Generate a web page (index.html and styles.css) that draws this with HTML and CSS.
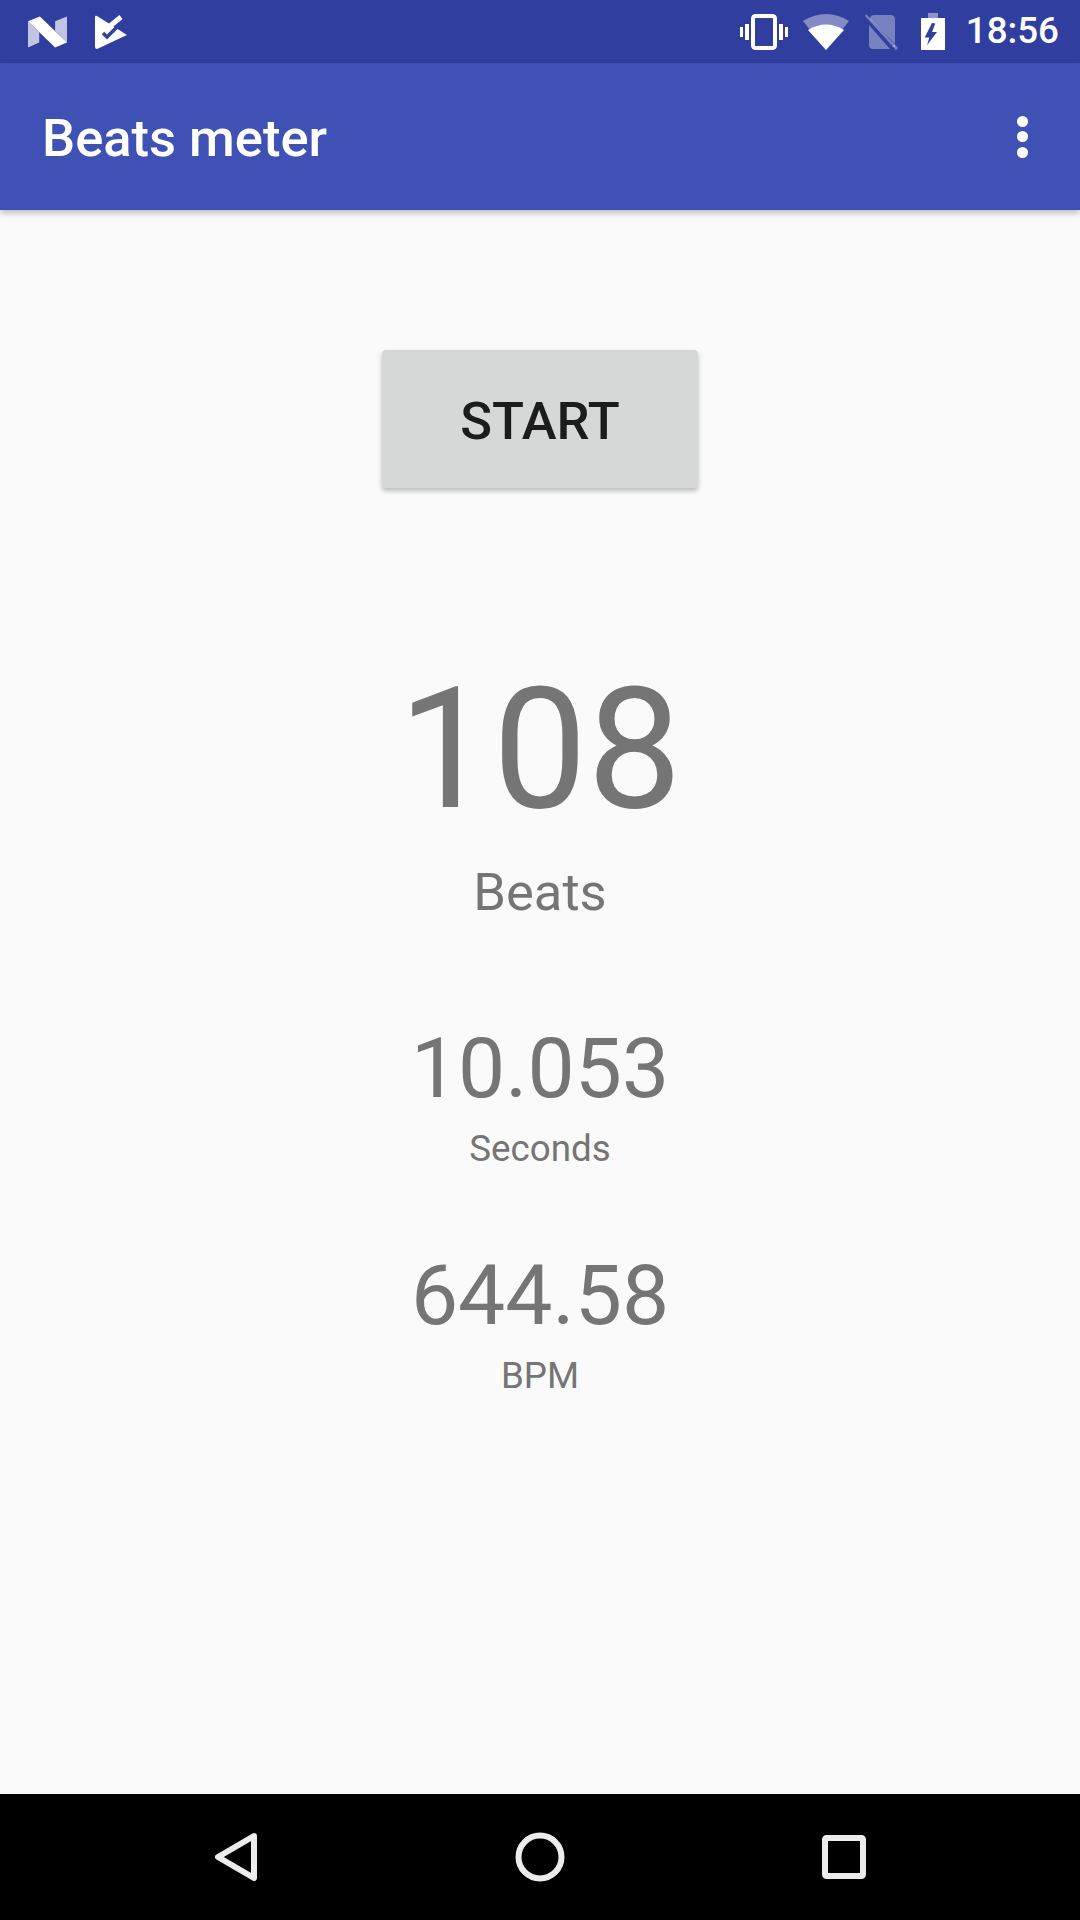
FILE: index.html
```html
<!DOCTYPE html>
<html lang="en">
<head>
<meta charset="utf-8">
<title>Beats meter</title>
<link rel="stylesheet" href="styles.css">
</head>
<body>
<div class="screen">
  <header class="statusbar">
    <div class="status-left">
      <svg class="icon-n" viewBox="85 47 115 94"><path class="dim" d="M85 62 118 95V125L85 140Z"/><path class="dim" d="M165 62 200 48V125L165 90Z"/><path d="M85 62 120 48 200 125 165 140Z"/></svg>
      <svg class="icon-check" viewBox="0 0 33 34"><path d="M0 2Q0 0 2 1L32 20 2 34Q0 34 0 32Z"/><path class="tick" d="M15 11 26 2"/><path class="notch" d="M8 18 12 22 25 9"/></svg>
    </div>
    <div class="status-right">
      <svg class="icon-vibrate" viewBox="0 0 48 36"><rect x="13" y="2" width="22" height="32" rx="2.5"/><path d="M7 10V26M1 13V23M41 10V26M47 13V23"/></svg>
      <svg class="icon-wifi" viewBox="0 0 46 36"><path class="dim" d="M23 36 0 7Q23-7 46 7Z"/><path d="M23 36 5 16Q23 5 41 16Z"/></svg>
      <svg class="icon-sim" viewBox="0 0 36 36"><path class="dim" d="M6 5Q6 1 10 1H26Q31 1 31 5V30L6 5ZM5 11 26 35H9Q5 35 5 31Z"/><path class="dim" d="M1 2 2 0 34 34 32 36Z"/><path class="dim" d="M28 33H31V30Z"/></svg>
      <svg class="icon-battery" viewBox="0 0 24 37"><path class="dim" d="M7 0H17V5H7Z"/><path d="M0 5H24V37H0Z"/><path class="bolt" d="M11 10 3.7 24.6H8.4L6 32.3 16 19H11L14.3 10.6Z"/></svg>
      <span class="clock">18:56</span>
    </div>
  </header>
  <div class="toolbar">
    <h1 class="title">Beats meter</h1>
    <div class="overflow"><i></i><i></i><i></i></div>
  </div>
  <main class="content">
    <button class="start">START</button>
    <div class="big-value">108</div>
    <div class="big-label">Beats</div>
    <div class="value seconds">10.053</div>
    <div class="label">Seconds</div>
    <div class="value bpm">644.58</div>
    <div class="label">BPM</div>
  </main>
  <nav class="navbar">
    <svg class="nav-back" viewBox="0 0 46 50"><path d="M41 4 5 25 41 46Z"/></svg>
    <svg class="nav-home" viewBox="0 0 50 50"><circle cx="25" cy="25" r="21.5"/></svg>
    <svg class="nav-recent" viewBox="0 0 46 46"><rect x="4" y="4" width="38" height="38" rx="1.5"/></svg>
  </nav>
</div>
</body>
</html>
```
FILE: styles.css
```css
* { box-sizing: border-box; }
html, body { margin: 0; padding: 0; }
body { font-family: Roboto, sans-serif; background: #fafafa; }
.screen { width: 1080px; height: 1920px; display: flex; flex-direction: column; overflow: hidden; }
.statusbar { height: 63px; background: #303f9f; display: flex; justify-content: space-between; align-items: center; padding: 0 21px 0 28px; }
.statusbar svg { display: block; fill: #fff; flex: none; }
.statusbar .dim { opacity: .7; }
.status-left, .status-right { display: flex; align-items: center; }
.icon-n { width: 39px; height: 32px; }
.icon-check { width: 33px; height: 34px; margin-left: 28px; }
.icon-check .tick { fill: none; stroke: #fff; stroke-width: 5; }
.icon-check .notch { fill: none; stroke: #303f9f; stroke-width: 3.5; }
.icon-vibrate { width: 48px; height: 36px; }
.icon-vibrate rect, .icon-vibrate path { fill: none; stroke: #fff; stroke-width: 4; }
.icon-wifi { width: 46px; height: 36px; margin-left: 15px; }
.icon-wifi .dim { opacity: .4; }
.icon-sim { width: 36px; height: 36px; margin-left: 15px; }
.icon-sim .dim { opacity: .35; }
.icon-battery { width: 24px; height: 37px; margin-left: 21px; }
.icon-battery .dim { opacity: .45; }
.icon-battery .bolt { fill: #303f9f; }
.clock { font-size: 36.75px; font-weight: 500; color: #fff; margin-left: 21px; line-height: 1; }
.toolbar { height: 147px; background: #3f51b5; display: flex; align-items: center; justify-content: space-between; padding: 0 52px 0 42px; box-shadow: 0 3px 6px rgba(0,0,0,.25); position: relative; }
.title { margin: 3px 0 0; font-size: 52.5px; font-weight: 500; color: #fff; }
.overflow { display: flex; flex-direction: column; gap: 4.5px; }
.overflow i { display: block; width: 11px; height: 11px; border-radius: 50%; background: #fff; }
.content { flex: 1; display: flex; flex-direction: column; align-items: center; padding-top: 140px; color: #757575; }
.start { width: 316px; height: 138px; border: 0; border-radius: 4px; background: #d6d7d7; color: #1c1c1c; font: 500 52.5px Roboto, sans-serif; box-shadow: 0 3px 5px rgba(0,0,0,.25); padding: 4px 0 0; }
.big-value { font-size: 168px; line-height: 196px; margin-top: 164px; }
.big-label { font-size: 52.5px; line-height: 62px; margin-top: 13px; }
.value { font-size: 84px; line-height: 98px; }
.seconds { margin-top: 97px; }
.bpm { margin-top: 75px; }
.label { font-size: 36.75px; line-height: 46px; margin-top: 8px; }
.navbar { height: 126px; background: #000; display: grid; grid-template-columns: 1fr 1fr 1fr; align-items: center; justify-items: center; padding: 0 84px; }
.navbar svg { fill: none; stroke: #ececec; stroke-width: 6; stroke-linejoin: round; display: block; }
.nav-back { width: 46px; height: 50px; }
.nav-home { width: 50px; height: 50px; }
.nav-recent { width: 46px; height: 46px; }
```
